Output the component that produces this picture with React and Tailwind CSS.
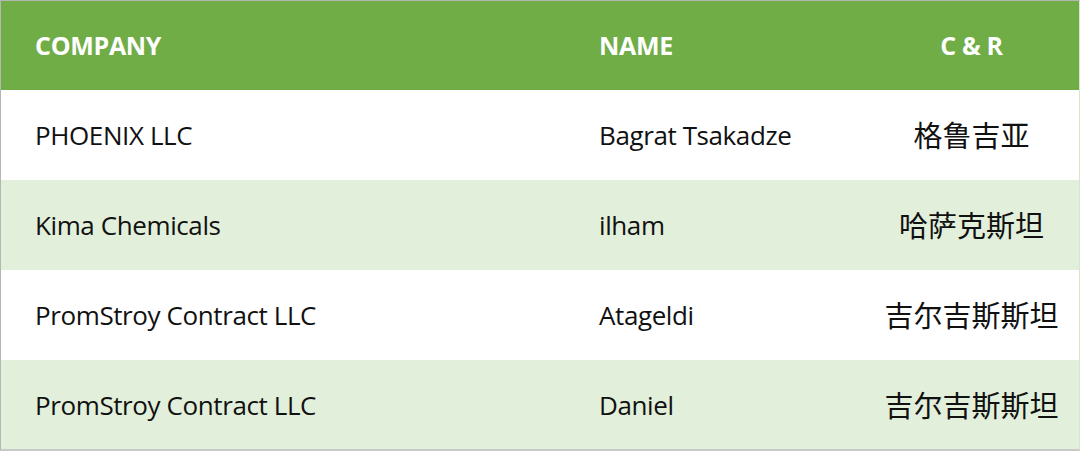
import React from "react";

const rows = [
  { company: "PHOENIX LLC", name: "Bagrat Tsakadze", cr: "格鲁吉亚" },
  { company: "Kima Chemicals", name: "ilham", cr: "哈萨克斯坦" },
  { company: "PromStroy Contract LLC", name: "Atageldi", cr: "吉尔吉斯斯坦" },
  { company: "PromStroy Contract LLC", name: "Daniel", cr: "吉尔吉斯斯坦" },
];

export default function App() {
  return (
    <div
      className="w-[1080px] h-[451px] bg-white border-t border-l border-[#b5b5b5] border-b-2 border-b-[#c8c8c8] border-r border-r-[#d6e6cc] overflow-hidden"
      style={{ fontFamily: '"Open Sans", "Noto Sans CJK SC", sans-serif' }}
    >
      <div className="grid grid-cols-[564px_301px_1fr] h-[89px] bg-[#70ad47] items-center text-white font-bold text-[25px] tracking-[-0.3px]">
        <div className="pl-[34px]">COMPANY</div>
        <div className="pl-[34px]">NAME</div>
        <div className="text-center pr-[2px]">C &amp; R</div>
      </div>
      {rows.map((r, i) => (
        <div
          key={i}
          className={`grid grid-cols-[564px_301px_1fr] h-[90px] items-center text-[#111] ${i % 2 === 1 ? "bg-[#e2efda]" : "bg-white"}`}
        >
          <div className="pl-[34px] text-[26px] tracking-[-0.4px]">{r.company}</div>
          <div className="pl-[34px] text-[26px] tracking-[-0.4px]">{r.name}</div>
          <div
            className="text-center text-[29px] pr-[2px]"
            style={{ fontFamily: '"Noto Sans CJK SC", sans-serif' }}
          >
            {r.cr}
          </div>
        </div>
      ))}
    </div>
  );
}
